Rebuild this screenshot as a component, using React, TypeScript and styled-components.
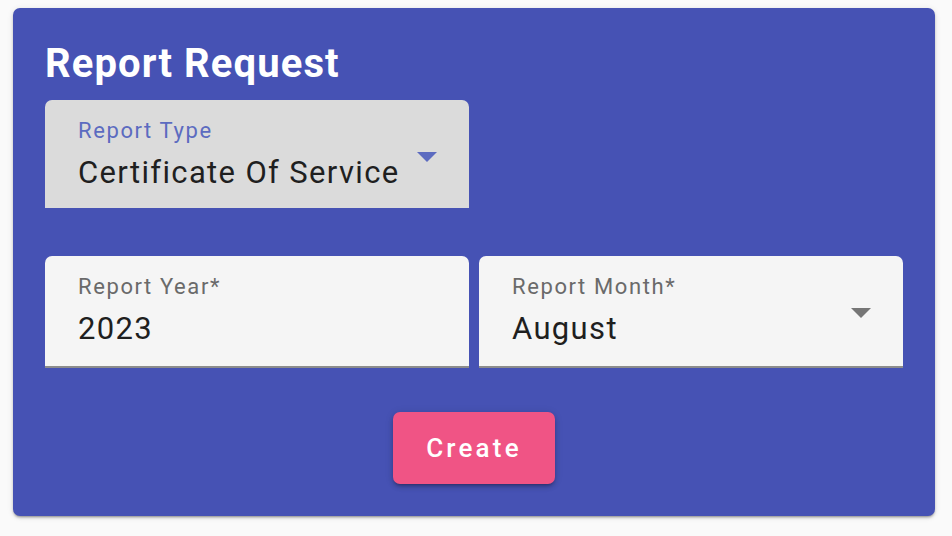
import styled, { createGlobalStyle } from 'styled-components';

const GlobalStyle = createGlobalStyle`
  html, body {
    margin: 0;
    padding: 0;
    background: #fafafa;
    font-family: Roboto, "Liberation Sans", Arial, sans-serif;
  }
`;

const Page = styled.div`
  padding: 8px 17px 20px 13px;
`;

const Card = styled.div`
  background: #4652b4;
  border-radius: 7px;
  padding: 32px;
  box-shadow: 0 2px 2px -1px rgba(0, 0, 0, 0.25), 0 2px 3px rgba(0, 0, 0, 0.14),
    0 1px 6px rgba(0, 0, 0, 0.1);
`;

const Title = styled.h1`
  margin: 0 0 12px;
  font-size: 40px;
  line-height: 48px;
  font-weight: 700;
  color: #fff;
  letter-spacing: 1.1px;
`;

const Field = styled.div<{ $focused?: boolean; $underline?: boolean }>`
  position: relative;
  box-sizing: border-box;
  height: ${p => (p.$underline ? 112 : 108)}px;
  padding: 19px 32px 0 33px;
  background: ${p => (p.$focused ? '#dbdbdb' : '#f5f5f5')};
  border-top-left-radius: 7px;
  border-top-right-radius: 7px;
  border-bottom: ${p => (p.$underline ? '2px solid #8c8c8c' : 'none')};
`;

const Label = styled.div<{ $focused?: boolean }>`
  font-size: 22px;
  line-height: 24px;
  letter-spacing: 1.6px;
  color: ${p => (p.$focused ? '#5c6bc0' : '#6a6a6a')};
`;

const Value = styled.div`
  margin-top: 12px;
  font-size: 31px;
  line-height: 36px;
  letter-spacing: 1.35px;
  color: #1f1f1f;
`;

const Arrow = styled.svg`
  position: absolute;
  top: 52px;
  right: 32px;
  width: 20px;
  height: 10px;
`;

const TypeRow = styled.div`
  display: grid;
  grid-template-columns: 1fr 1fr;
  gap: 10px;
  margin-bottom: 48px;
`;

const Row = styled.div`
  display: grid;
  grid-template-columns: 1fr 1fr;
  gap: 10px;
  margin-bottom: 44px;
`;

const Actions = styled.div`
  display: flex;
  justify-content: center;
`;

const Button = styled.button`
  width: 162px;
  height: 72px;
  padding: 0;
  border: none;
  border-radius: 7px;
  background: #f05485;
  color: #fff;
  font-family: Roboto, "Liberation Sans", Arial, sans-serif;
  font-size: 26px;
  font-weight: 500;
  letter-spacing: 3.2px;
  cursor: pointer;
  box-shadow: 0 3px 3px -2px rgba(0, 0, 0, 0.25), 0 3px 5px rgba(0, 0, 0, 0.16),
    0 1px 9px rgba(0, 0, 0, 0.12);
`;

const DropArrow = ({ color }: { color: string }) => (
  <Arrow viewBox="0 0 20 10">
    <path d="M0 0 L20 0 L10 10 Z" fill={color} />
  </Arrow>
);

export default function App() {
  return (
    <>
      <GlobalStyle />
      <Page>
        <Card>
          <Title>Report Request</Title>
          <TypeRow>
            <Field $focused>
              <Label $focused>Report Type</Label>
              <Value>Certificate Of Service</Value>
              <DropArrow color="#5c6bc0" />
            </Field>
          </TypeRow>
          <Row>
            <Field $underline>
              <Label>Report Year*</Label>
              <Value>2023</Value>
            </Field>
            <Field $underline>
              <Label>Report Month*</Label>
              <Value>August</Value>
              <DropArrow color="#767676" />
            </Field>
          </Row>
          <Actions>
            <Button>Create</Button>
          </Actions>
        </Card>
      </Page>
    </>
  );
}
